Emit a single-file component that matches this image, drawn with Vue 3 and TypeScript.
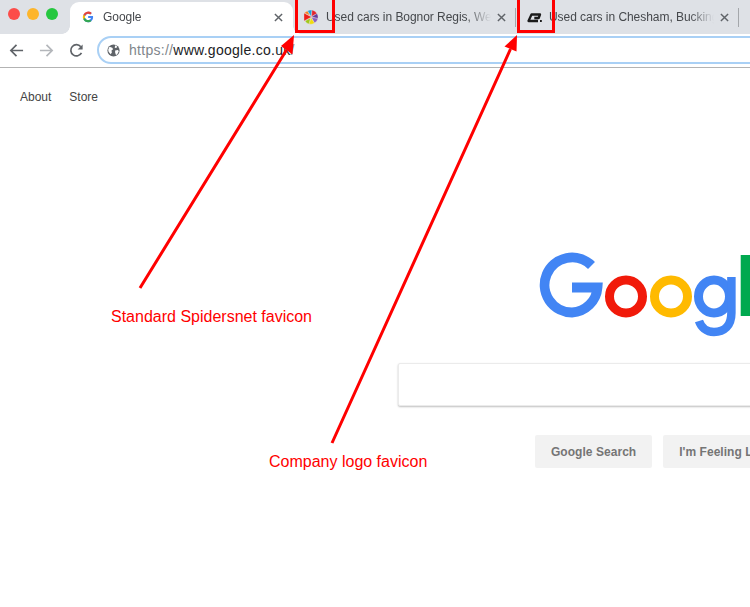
<script setup lang="ts">
interface Tab {
  id: number
  titulo: string
  ativa: boolean
}

const abas: Tab[] = [
  { id: 1, titulo: 'Google', ativa: true },
  { id: 2, titulo: 'Used cars in Bognor Regis, West Sussex', ativa: false },
  { id: 3, titulo: 'Used cars in Chesham, Buckinghamshire', ativa: false }
]
</script>

<template>
  <div class="janela">
    <div class="abas">
      <div class="semaforo">
        <span class="luz vermelha"></span>
        <span class="luz amarela"></span>
        <span class="luz verde"></span>
      </div>

      <div
        v-for="aba in abas"
        :key="aba.id"
        class="aba"
        :class="{ ativa: aba.ativa }"
      >
        <svg v-if="aba.id === 1" class="favicon pequeno" viewBox="0 0 16 16">
          <path d="M14.600 6.700H8.200v2.700h3.700c-.4 1.800-1.900 2.900-3.700 2.900a4.300 4.300 0 1 1 2.800-7.600l2-2A7 7 0 1 0 8.200 15c3.600 0 6.600-2.600 6.600-7 0-.5-.1-.9-.2-1.300z" fill="#4285f4" />
          <path d="M1.800 4.900l2.300 1.700A4.300 4.300 0 0 1 11 4.700l2-2A7 7 0 0 0 1.800 4.900z" fill="#ea4335" />
          <path d="M1.700 11l2.400-1.800a4.300 4.300 0 0 1 0-2.600L1.800 4.900a7 7 0 0 0-.1 6.100z" fill="#fbbc05" />
          <path d="M8.200 15a6.700 6.700 0 0 0 4.500-1.700l-2.300-1.800a4.300 4.300 0 0 1-6.300-2.300L1.700 11A7 7 0 0 0 8.200 15z" fill="#34a853" />
        </svg>
        <svg v-else-if="aba.id === 2" class="favicon" viewBox="0 0 16 16">
          <g stroke="#dee1e6" stroke-width="0.35">
            <path d="M8 7.500L4.500 2A7 7 0 0 1 9 1z" fill="#18a4e0" />
            <path d="M8.500 7.500L9 1A7 7 0 0 1 14 4.500z" fill="#e3262e" />
            <path d="M8.500 8L14 4.500A7 7 0 0 1 15 9.500z" fill="#6a3d9a" />
            <path d="M8.500 8.500L15 9.500A7 7 0 0 1 11.500 14z" fill="#8a5fc0" />
            <path d="M8 8.500L11.500 14A7 7 0 0 1 6 15z" fill="#f2dc0c" />
            <path d="M7.500 9L6 15A7 7 0 0 1 2 12z" fill="#a2c81a" />
            <path d="M8.500 8L1 12V4z" fill="#ee2018" />
            <path d="M7 6.500L1.500 4A7 7 0 0 1 4.500 2z" fill="#f58220" />
          </g>
        </svg>
        <svg v-else class="favicon" viewBox="0 0 16 16">
          <path d="M12 12H2.500L5.500 5.500H14L12.700 9H8.300" fill="none" stroke="#1a1a1a" stroke-width="2.300" stroke-linejoin="round" />
          <rect x="14" y="11" width="1.800" height="2" fill="#1a1a1a" />
        </svg>

        <span class="titulo">{{ aba.titulo }}</span>

        <svg class="fechar" viewBox="0 0 10 10">
          <path d="M1 1l8 8M9 1l-8 8" />
        </svg>

        <span v-if="!aba.ativa" class="separador"></span>
      </div>
    </div>

    <div class="barra">
      <svg class="nav" viewBox="0 0 16 16">
        <path d="M15 8H2M8 2L2 8l6 6" stroke="#5f6368" />
      </svg>
      <svg class="nav" viewBox="0 0 16 16">
        <path d="M1 8h13M8 2l6 6-6 6" stroke="#b4b7bb" />
      </svg>
      <svg class="nav" viewBox="0 0 16 16">
        <path d="M13.300 10.500A6 6 0 1 1 12.600 4" stroke="#5f6368" />
        <path d="M14.500 1.500v5.300H9.200z" fill="#5f6368" />
      </svg>

      <div class="endereco">
        <svg class="globo" viewBox="0 0 16 16">
          <circle cx="8" cy="8" r="7.500" fill="#5f6368" />
          <path d="M3 3.500l3.500 1 1 2-2 1.500.5 2.500-1.500 2L2 9.500 1.500 7zM10 1.500l2.500 1.500-1 2-2-.5zM10 8l3.500-.5 1 1.500-2 4-1.500.5-1-3z" fill="#fff" />
        </svg>
        <span class="url"><span class="cinza">https://</span>www.google.co.uk<span class="cinza">/</span></span>
      </div>
    </div>

    <main class="pagina">
      <nav class="links">
        <a>About</a>
        <a>Store</a>
      </nav>

      <div class="centro">
        <svg class="logo" viewBox="0 0 212 86">
          <path d="M53.500 14.500A27.500 27.500 0 1 0 34 61.500A27 27 0 0 0 59.500 36.500H34" fill="none" stroke="#4285f4" stroke-width="9.800" />
          <circle cx="88" cy="45.500" r="16.500" fill="none" stroke="#f11a0a" stroke-width="9" />
          <circle cx="133" cy="45.500" r="16.500" fill="none" stroke="#ffba00" stroke-width="9" />
          <ellipse cx="176" cy="45.500" rx="15.500" ry="16.500" fill="none" stroke="#4285f4" stroke-width="9" />
          <path d="M193.400 26V62C193.400 75 186 81 176 81C168 81 163 76 161 70" fill="none" stroke="#4285f4" stroke-width="8.500" />
          <rect x="202.700" y="4" width="9.300" height="61" fill="#00a94f" />
        </svg>

        <div class="busca"></div>

        <div class="botoes">
          <button>Google Search</button>
          <button>I'm Feeling Lucky</button>
        </div>
      </div>

      <p class="nota nota1">Standard Spidersnet favicon</p>
      <p class="nota nota2">Company logo favicon</p>
    </main>

    <span class="marca marca1"></span>
    <span class="marca marca2"></span>

    <svg class="setas" viewBox="0 0 750 607">
      <path d="M140 288L286.500 50M332 443L510.500 49" stroke="#ff0000" stroke-width="3" fill="none" />
      <path d="M294 35L281 46L292.500 54.500z" fill="#ff0000" />
      <path d="M517 35L504.500 46.500L516.500 51.500z" fill="#ff0000" />
    </svg>
  </div>
</template>

<style scoped>
.janela {
  position: relative;
  width: 750px;
  height: 607px;
  overflow: hidden;
  background: #fff;
  font-family: "Liberation Sans", Arial, sans-serif;
}

.abas {
  display: flex;
  height: 34px;
  background: #dee1e6;
}

.semaforo {
  display: flex;
  align-items: center;
  gap: 7px;
  width: 70px;
  flex: none;
  height: 28px;
  padding-left: 8px;
  box-sizing: border-box;
}

.luz {
  width: 12px;
  height: 12px;
  border-radius: 50%;
}

.vermelha { background: #fc4d4a; }
.amarela { background: #fdb52b; }
.verde { background: #25c73f; }

.aba {
  position: relative;
  display: flex;
  align-items: center;
  flex: none;
  width: 223px;
  box-sizing: border-box;
  padding: 0 10px;
  font-size: 12px;
  letter-spacing: -0.05px;
  color: #45484c;
}

.ativa {
  background: #fff;
  border-radius: 9px 9px 0 0;
  margin-top: 2px;
  height: 32px;
  padding-left: 12px;
  padding-bottom: 2px;
}

.ativa::before,
.ativa::after {
  content: "";
  position: absolute;
  bottom: 0;
  width: 8px;
  height: 8px;
}

.ativa::before {
  left: -8px;
  background: radial-gradient(circle at 0 0, #dee1e6 7.500px, #fff 8px);
}

.ativa::after {
  right: -8px;
  background: radial-gradient(circle at 100% 0, #dee1e6 7.500px, #fff 8px);
}

.favicon {
  width: 16px;
  height: 16px;
  flex: none;
  margin-right: 7px;
}

.pequeno {
  width: 12px;
  height: 12px;
  margin-right: 9px;
}

.titulo {
  flex: 1;
  min-width: 0;
  overflow: hidden;
  white-space: nowrap;
  -webkit-mask-image: linear-gradient(to right, #000 85%, transparent);
  mask-image: linear-gradient(to right, #000 85%, transparent);
}

.fechar {
  width: 9px;
  height: 9px;
  flex: none;
  margin-left: 6px;
  stroke: #5f6368;
  stroke-width: 1.600;
}

.separador {
  position: absolute;
  right: 0;
  top: 8px;
  width: 1px;
  height: 19px;
  background: #a4a7ab;
}

.barra {
  display: flex;
  align-items: center;
  height: 34px;
  box-sizing: border-box;
  padding-left: 9px;
  border-bottom: 1px solid #b3b3b3;
}

.nav {
  width: 15px;
  height: 15px;
  flex: none;
  margin-right: 15px;
  fill: none;
  stroke-width: 1.800;
}

.nav:nth-child(3) {
  margin-right: 13px;
}

.endereco {
  display: flex;
  align-items: center;
  flex: none;
  width: 700px;
  height: 28px;
  box-sizing: border-box;
  margin-top: -1px;
  padding-left: 8px;
  border: 2px solid #a9d0f5;
  border-radius: 14px;
}

.globo {
  width: 13px;
  height: 13px;
  flex: none;
  margin-right: 9px;
}

.url {
  font-size: 14px;
  letter-spacing: 0.28px;
  color: #202124;
}

.cinza {
  color: #80868b;
}

.pagina {
  position: relative;
}

.links {
  display: flex;
  gap: 18px;
  padding: 22px 0 0 20px;
  font-size: 12px;
  line-height: 14px;
  color: #444;
}

.centro {
  display: flex;
  flex-direction: column;
  padding: 147px 0 0 398px;
}

.logo {
  width: 212px;
  height: 86px;
  margin-left: 140px;
  flex: none;
}

.busca {
  width: 500px;
  height: 43px;
  flex: none;
  margin-top: 26px;
  box-sizing: border-box;
  background: #fff;
  border: 1px solid #ebebeb;
  border-radius: 2px;
  box-shadow: 0 1px 2px rgba(0, 0, 0, 0.25);
}

.botoes {
  display: flex;
  gap: 11px;
  margin-top: 29px;
  margin-left: 137px;
  width: 400px;
}

.botoes button {
  flex: none;
  height: 33px;
  padding: 0 16px;
  border: 0;
  border-radius: 2px;
  background: #f2f2f2;
  font-family: inherit;
  font-size: 12px;
  letter-spacing: 0.04px;
  font-weight: 700;
  color: #757575;
  white-space: nowrap;
}

.nota {
  position: absolute;
  margin: 0;
  font-size: 16px;
  line-height: 18px;
  color: #f00;
  white-space: nowrap;
}

.nota1 {
  left: 111px;
  top: 240px;
}

.nota2 {
  left: 269px;
  top: 385px;
}

.marca {
  position: absolute;
  top: -3px;
  height: 36px;
  box-sizing: border-box;
  border: 3px solid #f00;
}

.marca1 {
  left: 295px;
  width: 40px;
}

.marca2 {
  left: 517px;
  width: 38px;
}

.setas {
  position: absolute;
  left: 0;
  top: 0;
  width: 750px;
  height: 607px;
  pointer-events: none;
}
</style>
